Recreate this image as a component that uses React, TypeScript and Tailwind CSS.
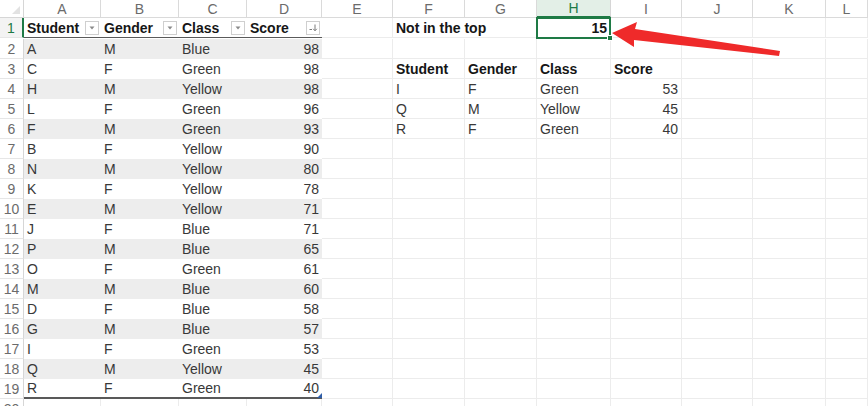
import React from 'react';

const COLS = 'grid grid-cols-[24px_77px_78px_68px_75px_71px_72px_72px_74px_71px_71px_73px_42px]';
const LETTERS = ['A', 'B', 'C', 'D', 'E', 'F', 'G', 'H', 'I', 'J', 'K', 'L'];

const students: [string, string, string, number][] = [
  ['A', 'M', 'Blue', 98],
  ['C', 'F', 'Green', 98],
  ['H', 'M', 'Yellow', 98],
  ['L', 'F', 'Green', 96],
  ['F', 'M', 'Green', 93],
  ['B', 'F', 'Yellow', 90],
  ['N', 'M', 'Yellow', 80],
  ['K', 'F', 'Yellow', 78],
  ['E', 'M', 'Yellow', 71],
  ['J', 'F', 'Blue', 71],
  ['P', 'M', 'Blue', 65],
  ['O', 'F', 'Green', 61],
  ['M', 'M', 'Blue', 60],
  ['D', 'F', 'Blue', 58],
  ['G', 'M', 'Blue', 57],
  ['I', 'F', 'Green', 53],
  ['Q', 'M', 'Yellow', 45],
  ['R', 'F', 'Green', 40],
];

const notTop: [string, string, string, number][] = [
  ['I', 'F', 'Green', 53],
  ['Q', 'M', 'Yellow', 45],
  ['R', 'F', 'Green', 40],
];

function FilterBtn({ sorted }: { sorted?: boolean }) {
  return (
    <span className="flex h-[14px] w-[14px] shrink-0 items-center justify-center border border-[#cfcfcf] bg-white">
      {sorted ? (
        <svg width="10" height="10" viewBox="0 0 10 10">
          <path d="M7 1.5v6M5.2 5.8 7 7.8l1.8-2M1.5 6.5h2.5" stroke="#7a7a7a" strokeWidth="1" fill="none" />
        </svg>
      ) : (
        <svg width="8" height="8" viewBox="0 0 8 8">
          <path d="M1.5 2.5h5L4 5.5z" fill="#8a8a8a" />
        </svg>
      )}
    </span>
  );
}

function Cell({ children, right, bold, className = '' }: { children?: React.ReactNode; right?: boolean; bold?: boolean; className?: string }) {
  return (
    <div
      className={`flex h-[20px] items-center overflow-visible whitespace-nowrap px-[3px] ${right ? 'justify-end' : ''} ${bold ? 'font-bold text-[#161616]' : 'text-[#383838]'} ${className}`}
    >
      {children}
    </div>
  );
}

function RowNum({ n, active }: { n: number; active?: boolean }) {
  return (
    <div
      className={`flex h-[20px] items-center justify-center border-b border-[#e6e6e6] text-[14px] ${active ? 'border-r-2 border-r-[#1e7a45] bg-[#f3f3f3] text-[#1e7a45]' : 'border-r border-r-[#d6d6d6] text-[#6b6b6b]'}`}
    >
      {n}
    </div>
  );
}

const grid = 'border-b border-r border-[#ececec]';

export default function App() {
  const rows: React.ReactNode[] = [];

  for (let r = 1; r <= 20; r++) {
    const cells: React.ReactNode[] = [];

    // columns A-D: the table
    if (r === 1) {
      const heads = ['Student', 'Gender', 'Class', 'Score'];
      heads.forEach((h, i) =>
        cells.push(
          <div key={`t${i}`} className="flex h-[20px] items-center justify-between border-b border-[#5a5a5a] bg-white pl-[3px] pr-[2px] font-bold text-[#161616]">
            <span>{h}</span>
            <FilterBtn sorted={i === 3} />
          </div>
        )
      );
    } else if (r <= 19) {
      const s = students[r - 2];
      const band = r % 2 === 0 ? 'bg-[#ededed]' : 'bg-white';
      const last = r === 19 ? 'border-b-2 border-[#595959]' : '';
      cells.push(<Cell key="a" className={`${band} ${last}`}>{s[0]}</Cell>);
      cells.push(<Cell key="b" className={`${band} ${last}`}>{s[1]}</Cell>);
      cells.push(<Cell key="c" className={`${band} ${last}`}>{s[2]}</Cell>);
      cells.push(
        <Cell key="d" right className={`relative ${band} ${last}`}>
          {s[3]}
          {r === 19 && (
            <svg className="absolute bottom-[-1px] right-0" width="5" height="5" viewBox="0 0 5 5">
              <path d="M5 0v5H0z" fill="#2f5ea8" />
            </svg>
          )}
        </Cell>
      );
    } else {
      for (let i = 0; i < 4; i++) cells.push(<Cell key={`e${i}`} className={grid} />);
    }

    // column E
    cells.push(<Cell key="E" className={grid} />);

    // columns F-L
    if (r === 1) {
      cells.push(<Cell key="F" bold className="border-b border-[#ececec]">Not in the top</Cell>);
      cells.push(<Cell key="G" className={grid} />);
      cells.push(
        <div key="H" className={`relative ${grid}`}>
          <Cell right bold>15</Cell>
          <div className="absolute inset-[-1px] border-2 border-[#1e7a45]" />
          <div className="absolute bottom-[-3px] right-[-3px] h-[6px] w-[6px] border border-white bg-[#1e7a45]" />
        </div>
      );
      ['I', 'J', 'K', 'L'].forEach((c) => cells.push(<Cell key={c} className={grid} />));
    } else if (r === 3) {
      ['Student', 'Gender', 'Class', 'Score'].forEach((h) =>
        cells.push(<Cell key={h} bold className={grid}>{h}</Cell>)
      );
      ['J', 'K', 'L'].forEach((c) => cells.push(<Cell key={c} className={grid} />));
    } else if (r >= 4 && r <= 6) {
      const s = notTop[r - 4];
      cells.push(<Cell key="F" className={grid}>{s[0]}</Cell>);
      cells.push(<Cell key="G" className={grid}>{s[1]}</Cell>);
      cells.push(<Cell key="H" className={grid}>{s[2]}</Cell>);
      cells.push(<Cell key="I" right className={grid}>{s[3]}</Cell>);
      ['J', 'K', 'L'].forEach((c) => cells.push(<Cell key={c} className={grid} />));
    } else {
      ['F', 'G', 'H', 'I', 'J', 'K', 'L'].forEach((c) => cells.push(<Cell key={c} className={grid} />));
    }

    rows.push(
      <div key={r} className={COLS}>
        <RowNum n={r} active={r === 1} />
        {cells}
      </div>
    );
  }

  return (
    <div className="relative h-[406px] w-[868px] overflow-hidden bg-white font-['Liberation_Sans',Arial,sans-serif] text-[14px] leading-none">
      {/* column letters */}
      <div className={`${COLS} h-[18px]`}>
        <div className="relative border-b border-r border-[#d6d6d6]">
          <svg className="absolute bottom-[3px] right-[3px]" width="8" height="8" viewBox="0 0 8 8">
            <path d="M8 0v8H0z" fill="#e2e2e2" />
          </svg>
        </div>
        {LETTERS.map((l) => (
          <div
            key={l}
            className={`flex items-center justify-center text-[14px] ${l === 'H' ? 'border-b-2 border-r border-b-[#1e7a45] border-r-[#d6d6d6] bg-[#e3efe7] text-[#1e7a45]' : 'border-b border-r border-[#dadada] text-[#6b6b6b]'}`}
          >
            {l}
          </div>
        ))}
      </div>

      {rows}

      {/* red callout arrow */}
      <svg className="pointer-events-none absolute left-0 top-0" width="868" height="406" viewBox="0 0 868 406">
        <path d="M612 33 L637 22 L635 29 L780 51 L779 56 L634 40 L634 47 Z" fill="#ef2a2a" />
      </svg>
    </div>
  );
}
